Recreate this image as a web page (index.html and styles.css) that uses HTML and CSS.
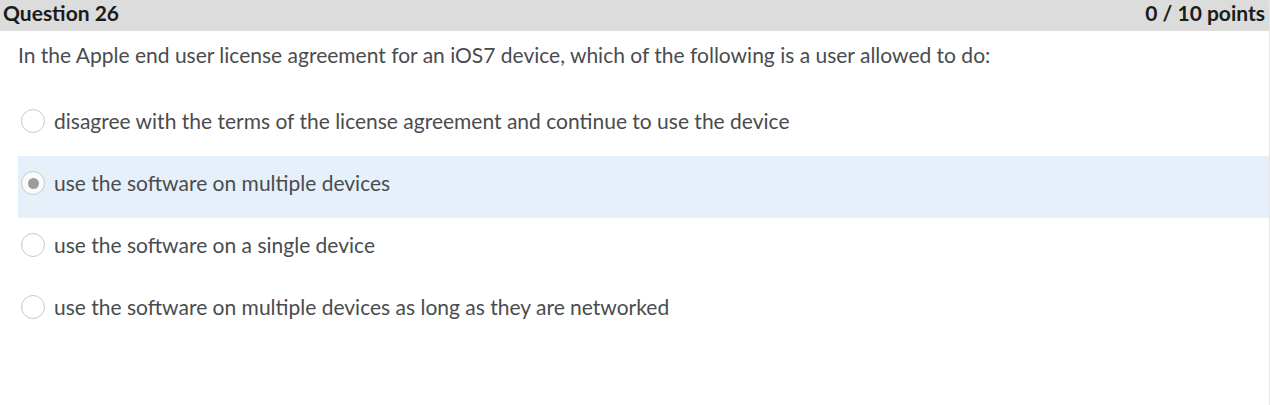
FILE: index.html
```html
<!DOCTYPE html>
<html>
<head>
<meta charset="utf-8">
<link rel="stylesheet" href="styles.css">
</head>
<body>
<div class="page">
  <div class="header">
    <span class="title">Question 26</span>
    <span class="points">0 / 10 points</span>
  </div>
  <div class="content">
    <p class="question">In the Apple end user license agreement for an iOS7 device, which of the following is a user allowed to do:</p>
    <div class="options">
      <div class="option"><span class="radio"></span><span class="label">disagree with the terms of the license agreement and continue to use the device</span></div>
      <div class="option selected"><span class="radio checked"></span><span class="label">use the software on multiple devices</span></div>
      <div class="option"><span class="radio"></span><span class="label">use the software on a single device</span></div>
      <div class="option"><span class="radio"></span><span class="label">use the software on multiple devices as long as they are networked</span></div>
    </div>
  </div>
</div>
</body>
</html>
```
FILE: styles.css
```css
html, body {
  margin: 0;
  padding: 0;
  background: #fff;
}
body {
  font-family: Lato, "Liberation Sans", sans-serif;
  color: #494c4e;
}
.page {
  width: 1269px;
  height: 405px;
  border-right: 1px solid #e6e6e6;
}
.header {
  height: 31px;
  background: #dcdcdc;
  display: flex;
  justify-content: space-between;
  align-items: flex-start;
  padding: 0 4px 0 3px;
  font-weight: bold;
  font-size: 21px;
  line-height: 26px;
  color: #1b1b1b;
}
.content {
  padding-left: 18px;
}
.question {
  margin: 0;
  padding-top: 11px;
  height: 63px;
  box-sizing: border-box;
  font-size: 21px;
  line-height: 26px;
}
.option {
  height: 62px;
  box-sizing: border-box;
  padding-bottom: 8px;
  display: flex;
  align-items: center;
}
.option.selected {
  background: #e6f0fb;
}
.radio {
  width: 24px;
  height: 24px;
  box-sizing: border-box;
  border: 1px solid #c8c8c8;
  border-radius: 50%;
  background: #fff;
  margin-left: 3px;
  margin-right: 9px;
  display: flex;
  align-items: center;
  justify-content: center;
  flex: none;
}
.radio.checked {
  background: #f9fbfd;
}
.radio.checked::after {
  content: "";
  width: 11px;
  height: 11px;
  border-radius: 50%;
  background: #9a9ca0;
}
.label {
  font-size: 21px;
  line-height: 26px;
}
```
